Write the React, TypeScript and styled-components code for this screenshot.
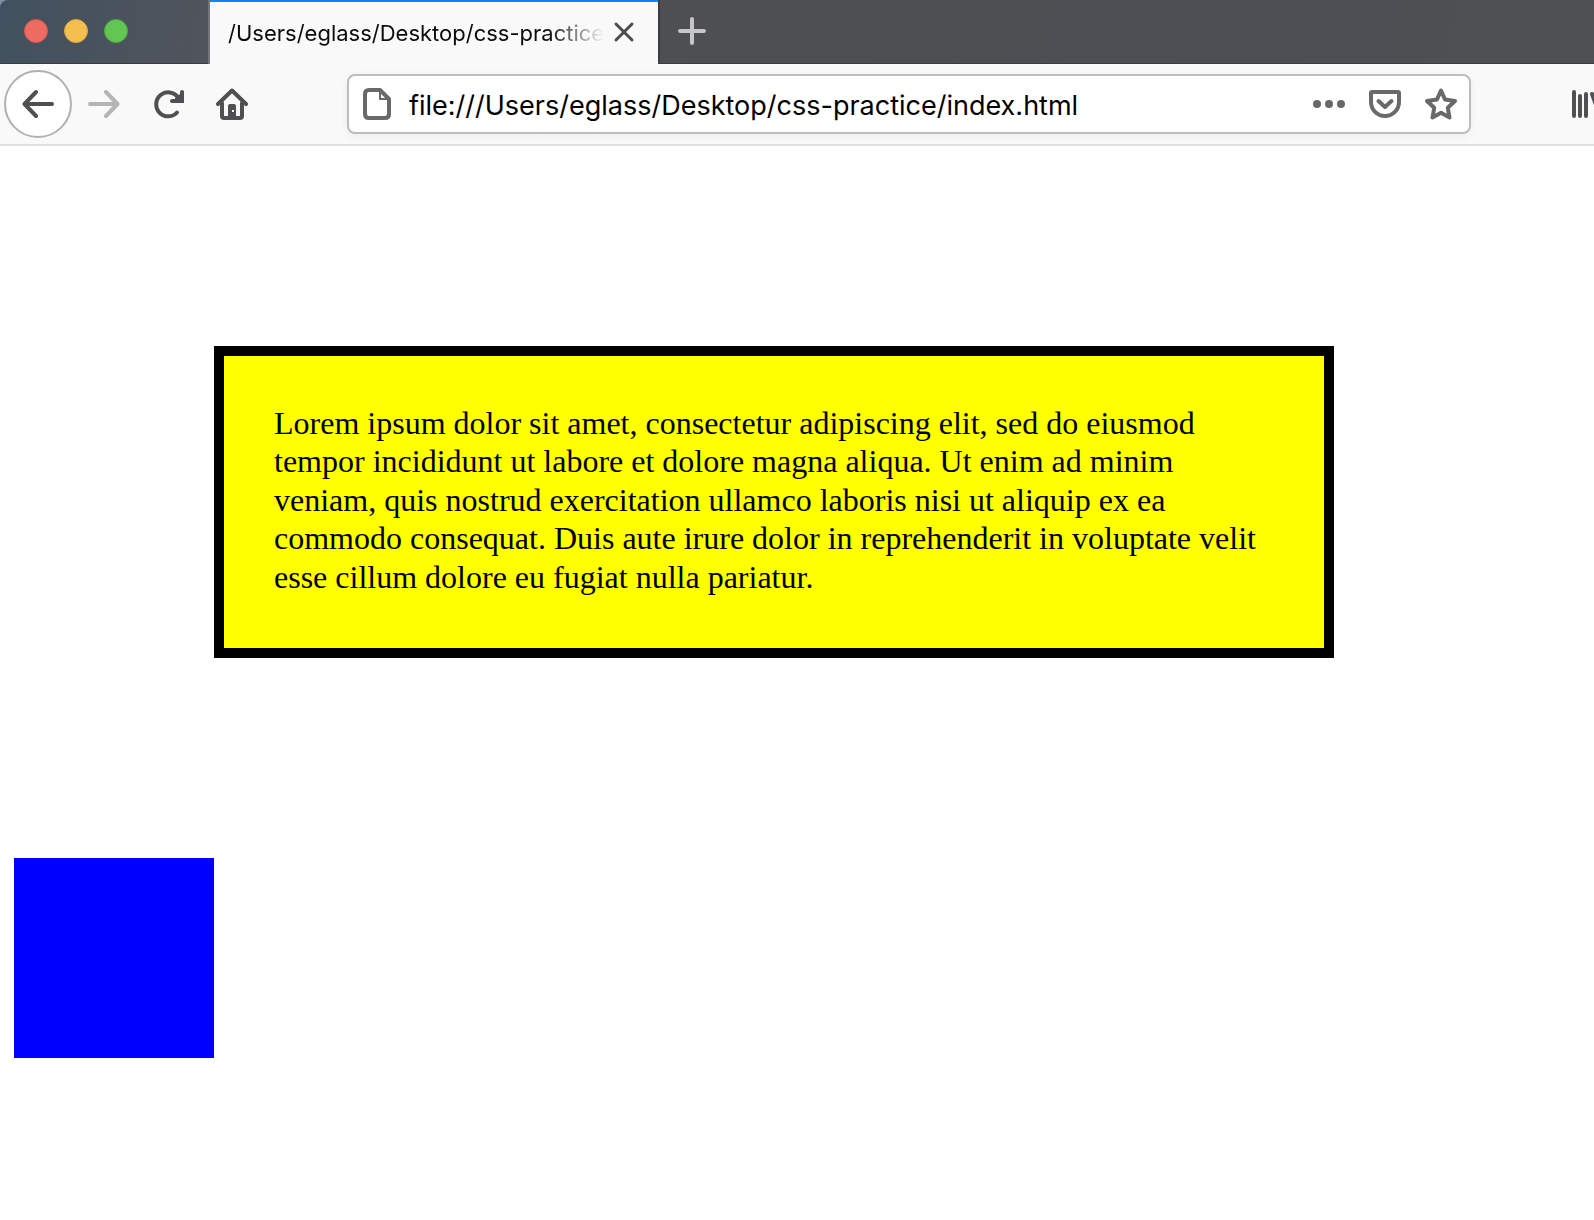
import React from "react";
import styled, { createGlobalStyle } from "styled-components";

const GlobalStyle = createGlobalStyle`
  *, *::before, *::after { box-sizing: border-box; }
  body { margin: 0; background: #ffffff; overflow-x: hidden; }
  button { border: 0; padding: 0; background: none; font: inherit; cursor: pointer; }
`;

const uiFont = `Inter, "Liberation Sans", sans-serif`;

const Chrome = styled.header`
  background: #7d90a6;
  font-family: ${uiFont};
`;

const TabStrip = styled.div`
  display: flex;
  height: 64px;
  border-top-left-radius: 8px;
  overflow: hidden;
  background: linear-gradient(100deg, #41515f 0%, #50545c 13%, #4d4f51 42%, #4b4f53 80%, #4f5052 100%);
  box-shadow: inset 0 -1px 0 #393b41;
`;

const WindowControls = styled.div`
  display: flex;
  flex: none;
  gap: 16px;
  width: 208px;
  padding: 19px 0 0 24px;
`;

const Light = styled.button<{ $fill: string; $edge: string }>`
  width: 24px;
  height: 24px;
  border-radius: 50%;
  background: ${(p) => p.$fill};
  border: 1px solid ${(p) => p.$edge};
`;

const Tab = styled.div`
  display: flex;
  flex: none;
  align-items: center;
  width: 450px;
  padding-left: 18px;
  border-left: 2px solid #73757a;
  background: linear-gradient(#0a84ff, #0a84ff) 0 0 / 100% 2px no-repeat #f9f9fa;
`;

const TabTitle = styled.span`
  flex: none;
  width: 376px;
  overflow: hidden;
  white-space: nowrap;
  font-size: 22px;
  line-height: 28px;
  padding-top: 2px;
  color: #0c0c0d;
  mask-image: linear-gradient(to left, transparent 0, #000 56px);
`;

const TabClose = styled.button`
  display: grid;
  place-items: center;
  width: 40px;
  height: 40px;
`;

const NewTab = styled.button`
  display: grid;
  place-items: center;
  width: 66px;
  height: 62px;
  border-left: 2px solid #3b3d41;
`;

const Toolbar = styled.nav`
  display: flex;
  align-items: center;
  height: 82px;
  padding: 0 0 2px 4px;
  background: #f9f9fa;
  box-shadow: inset 0 -2px 0 #e0e0e1;
  color: #505052;
`;

const BackButton = styled.button`
  display: grid;
  place-items: center;
  flex: none;
  width: 68px;
  height: 68px;
  border: 2px solid #b1b1b1;
  border-radius: 50%;
  background: #ffffff;
  color: inherit;
`;

const ToolButton = styled.button`
  display: grid;
  place-items: center;
  flex: none;
  width: 64px;
  height: 64px;
  color: inherit;

  &:disabled { color: #b5b5b6; }
`;

const AddressBar = styled.form`
  display: flex;
  flex: 1;
  align-items: center;
  min-width: 0;
  height: 60px;
  margin: 0 101px 0 83px;
  padding-left: 12px;
  border: 2px solid #bdbdbd;
  border-radius: 8px;
  background: #ffffff;
  box-shadow: 0 2px 8px rgba(0, 0, 0, 0.06);
  color: #696969;
`;

const AddressInput = styled.input`
  flex: 1;
  min-width: 0;
  height: 40px;
  margin-left: 16px;
  padding: 2px 0 0;
  border: 0;
  outline: 0;
  background: transparent;
  font-family: ${uiFont};
  font-size: 27px;
  color: #000000;
`;

const AddressAction = styled.button`
  display: grid;
  place-items: center;
  flex: none;
  width: 56px;
  height: 56px;
  color: inherit;
`;

const LibraryButton = styled.button`
  display: flex;
  align-items: center;
  flex: none;
  width: 22px;
  height: 64px;
  overflow: hidden;
  color: inherit;
`;

const Page = styled.main`
  display: flow-root;
  padding: 0 14px;
`;

const YellowBox = styled.section`
  box-sizing: content-box;
  max-width: 1000px;
  margin: 200px;
  padding: 48px 50px 52px;
  border: 10px solid #000000;
  background: #ffff00;
  font-family: "Liberation Serif", "Times New Roman", serif;
  font-size: 32px;
  line-height: 1.2;
  color: #000000;
`;

const BlueBox = styled.section`
  width: 200px;
  height: 200px;
  background: #0000ff;
`;

const Glyph = styled.svg.attrs({
  width: 32,
  height: 32,
  viewBox: "0 0 32 32",
  fill: "none",
  stroke: "currentColor",
  strokeWidth: 4,
  strokeLinecap: "round",
  strokeLinejoin: "round",
  "aria-hidden": true,
})`
  display: block;
  flex: none;
`;

export default function App() {
  return (
    <>
      <GlobalStyle />
      <Chrome>
        <TabStrip>
          <WindowControls>
            <Light $fill="#ed6b60" $edge="#d9574c" aria-label="Close window" />
            <Light $fill="#f5bf50" $edge="#dba53c" aria-label="Minimize window" />
            <Light $fill="#62c655" $edge="#4bab3f" aria-label="Zoom window" />
          </WindowControls>
          <Tab>
            <TabTitle>/Users/eglass/Desktop/css-practice</TabTitle>
            <TabClose aria-label="Close tab">
              <Glyph>
                <path d="M8 8L24 24M24 8L8 24" stroke="#4c4c4e" strokeWidth="3" />
              </Glyph>
            </TabClose>
          </Tab>
          <NewTab aria-label="New tab">
            <Glyph>
              <path d="M16 4V28M4 16H28" stroke="#c6c6c8" />
            </Glyph>
          </NewTab>
        </TabStrip>
        <Toolbar aria-label="Navigation">
          <BackButton aria-label="Back">
            <Glyph>
              <path d="M30 16H3M14 4L2.5 16L14 28" />
            </Glyph>
          </BackButton>
          <ToolButton aria-label="Forward" disabled>
            <Glyph>
              <path d="M2 16H29M18 4L29.5 16L18 28" />
            </Glyph>
          </ToolButton>
          <ToolButton aria-label="Reload">
            <Glyph>
              <path d="M25 24.500A12 12 0 1 1 26 9.400L29 13" />
              <path d="M32 3V15H20L24 9Z" fill="currentColor" stroke="none" />
              <path d="M30 4V13H20" />
            </Glyph>
          </ToolButton>
          <ToolButton aria-label="Home">
            <Glyph>
              <path d="M2 16L16 2.500L30 16" />
              <path d="M6 15V28Q6 30 8 30H24Q26 30 26 28V15" />
              <path
                d="M12 30V18Q12 16 14 16H18Q20 16 20 18V30ZM16 22V24H18V22Z"
                fill="currentColor"
                fillRule="evenodd"
                stroke="none"
              />
            </Glyph>
          </ToolButton>
          <AddressBar onSubmit={(event) => event.preventDefault()}>
            <Glyph>
              <path d="M8 2H19L28 11V26Q28 30 24 30H8Q4 30 4 26V6Q4 2 8 2Z" />
              <path d="M19 3V11H27" strokeWidth="2" />
            </Glyph>
            <AddressInput
              aria-label="Address"
              spellCheck={false}
              defaultValue="file:///Users/eglass/Desktop/css-practice/index.html"
            />
            <AddressAction type="button" aria-label="Page actions">
              <Glyph>
                <g fill="currentColor" stroke="none">
                  <circle cx="4" cy="16" r="4" />
                  <circle cx="16" cy="16" r="4" />
                  <circle cx="28" cy="16" r="4" />
                </g>
              </Glyph>
            </AddressAction>
            <AddressAction type="button" aria-label="Save to Pocket">
              <Glyph>
                <path d="M3 4H29Q30 4 30 5V14A14 14 0 0 1 2 14V5Q2 4 3 4Z" />
                <path d="M9.5 13L16 19L22.5 13" />
              </Glyph>
            </AddressAction>
            <AddressAction type="button" aria-label="Bookmark this page">
              <Glyph>
                <path d="M16 2.5L20 11.5L30 13L22.8 19.8L24.5 29.5L16 24.8L7.5 29.5L9.2 19.8L2 13L12 11.5Z" />
              </Glyph>
            </AddressAction>
          </AddressBar>
          <LibraryButton aria-label="Library">
            <Glyph>
              <path d="M2 4V28M8 8V28M14 6V28M20 6L28 28" />
            </Glyph>
          </LibraryButton>
        </Toolbar>
      </Chrome>
      <Page>
        <YellowBox>
          Lorem ipsum dolor sit amet, consectetur adipiscing elit, sed do eiusmod tempor incididunt ut
          labore et dolore magna aliqua. Ut enim ad minim veniam, quis nostrud exercitation ullamco
          laboris nisi ut aliquip ex ea commodo consequat. Duis aute irure dolor in reprehenderit in
          voluptate velit esse cillum dolore eu fugiat nulla pariatur.
        </YellowBox>
        <BlueBox aria-label="Blue box" />
      </Page>
    </>
  );
}
